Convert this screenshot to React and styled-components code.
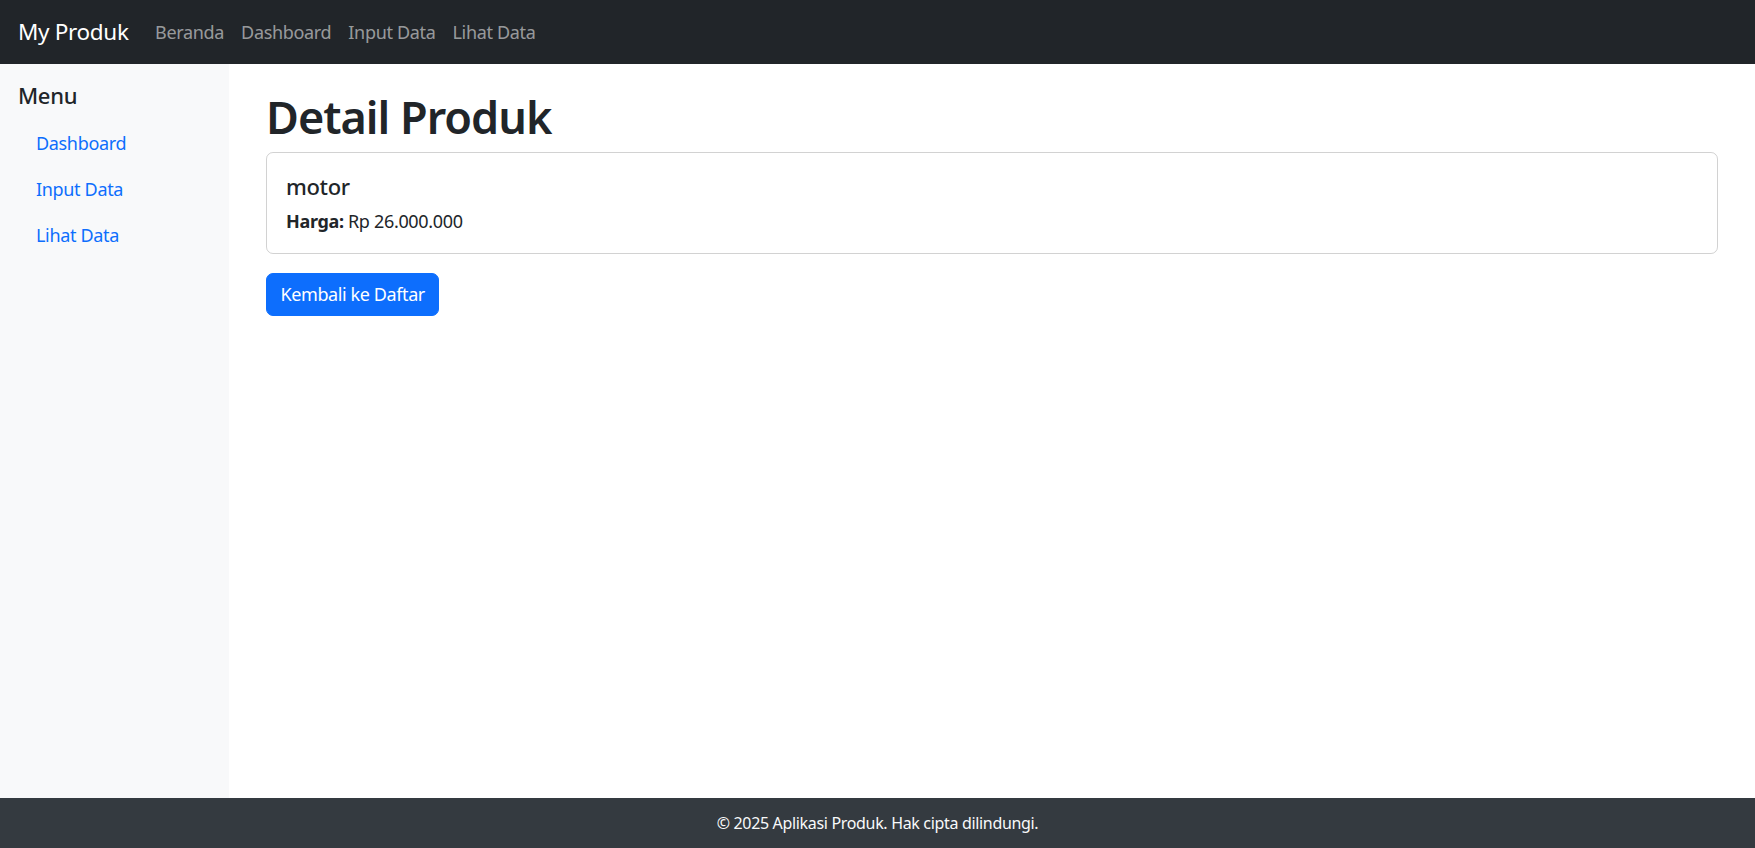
import React from 'react'
import styled, { createGlobalStyle } from 'styled-components'

const GlobalStyle = createGlobalStyle`
  * { box-sizing: border-box; }
  html, body { margin: 0; padding: 0; }
  body {
    font-family: "Noto Sans", "Open Sans", Arial, sans-serif;
    font-size: 18px;
    line-height: 1.5;
    letter-spacing: -0.33px;
    color: #212529;
    background: #fff;
  }
`

const menuLinks = ['Dashboard', 'Input Data', 'Lihat Data']

const App = () => {
  return (
    <>
      <GlobalStyle />
      <Page>
        <Navbar>
          <Brand href='#'>My Produk</Brand>
          <NavList>
            <NavLink href='#'>Beranda</NavLink>
            {menuLinks.map((label) => (
              <NavLink key={label} href='#'>
                {label}
              </NavLink>
            ))}
          </NavList>
        </Navbar>

        <Body>
          <Sidebar>
            <SideTitle>Menu</SideTitle>
            <SideNav>
              {menuLinks.map((label) => (
                <SideLink key={label} href='#'>
                  {label}
                </SideLink>
              ))}
            </SideNav>
          </Sidebar>

          <Main>
            <Title>Detail Produk</Title>
            <Card>
              <CardTitle>motor</CardTitle>
              <CardText>
                <strong>Harga:</strong> Rp 26.000.000
              </CardText>
            </Card>
            <Button href='#'>Kembali ke Daftar</Button>
          </Main>
        </Body>

        <Footer>© 2025 Aplikasi Produk. Hak cipta dilindungi.</Footer>
      </Page>
    </>
  )
}

const Page = styled.div`
  display: flex;
  flex-direction: column;
  min-height: 100vh;
`

const Navbar = styled.nav`
  height: 64px;
  background: #212529;
  display: flex;
  align-items: center;
  padding: 0 18px;
  flex-shrink: 0;
`

const Brand = styled.a`
  color: #fff;
  font-size: 22.5px;
  text-decoration: none;
  margin-right: 18px;
  line-height: 1.5;
`

const NavList = styled.div`
  display: flex;
  align-items: center;
`

const NavLink = styled.a`
  color: rgba(255, 255, 255, 0.55);
  text-decoration: none;
  padding: 9px 8.5px;
  font-size: 18px;
`

const Body = styled.div`
  flex: 1;
  display: flex;
`

const Sidebar = styled.aside`
  width: 229px;
  flex-shrink: 0;
  background: #f8f9fa;
  padding: 18px;
`

const SideTitle = styled.h5`
  margin: 0 0 12px;
  font-size: 22px;
  font-weight: 500;
  line-height: 1.2;
`

const SideNav = styled.div`
  display: flex;
  flex-direction: column;
`

const SideLink = styled.a`
  color: #0d6efd;
  text-decoration: none;
  padding: 9.5px 18px;
  line-height: 27px;
`

const Main = styled.main`
  flex: 1;
  padding: 26px 37px;
`

const Title = styled.h1`
  margin: 0 0 8px;
  font-size: 45px;
  font-weight: 600;
  line-height: 1.2;
  letter-spacing: -1px;
`

const Card = styled.div`
  border: 1px solid rgba(0, 0, 0, 0.176);
  border-radius: 7px;
  padding: 20px 19px 18px;
  margin-bottom: 19px;
`

const CardTitle = styled.h5`
  margin: 0 0 9px;
  font-size: 22px;
  font-weight: 500;
  line-height: 1.2;
`

const CardText = styled.p`
  margin: 0;
  strong { font-weight: 700; }
`

const Button = styled.a`
  display: inline-block;
  background: #0d6efd;
  color: #fff;
  border: 1px solid #0d6efd;
  border-radius: 7px;
  padding: 7px 13.5px;
  line-height: 27px;
  text-decoration: none;
  letter-spacing: -0.4px;
`

const Footer = styled.footer`
  height: 50px;
  flex-shrink: 0;
  background: #343a40;
  color: #f8f9fa;
  display: flex;
  align-items: center;
  justify-content: center;
  font-size: 16px;
`

export default App
